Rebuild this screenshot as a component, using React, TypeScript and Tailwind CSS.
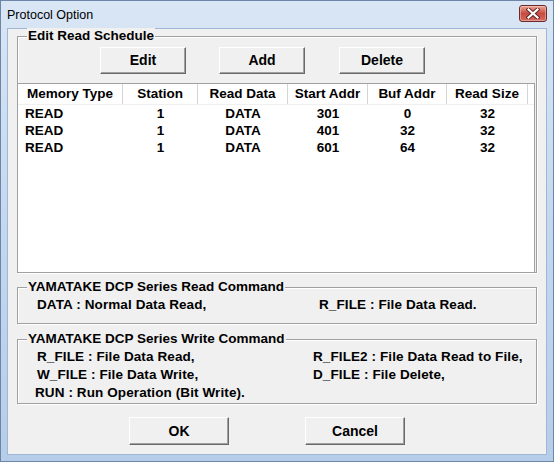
import React from 'react';

type Row = {
  memType: string;
  station: string;
  readData: string;
  startAddr: string;
  bufAddr: string;
  readSize: string;
};

const rows: Row[] = [
  { memType: 'READ', station: '1', readData: 'DATA', startAddr: '301', bufAddr: '0', readSize: '32' },
  { memType: 'READ', station: '1', readData: 'DATA', startAddr: '401', bufAddr: '32', readSize: '32' },
  { memType: 'READ', station: '1', readData: 'DATA', startAddr: '601', bufAddr: '64', readSize: '32' }
];

const headers = ['Memory Type', 'Station', 'Read Data', 'Start Addr', 'Buf Addr', 'Read Size'];

const WinButton = ({ label, className }: { label: string; className: string }) => (
  <button
    className={`flex items-center justify-center border border-t-white border-l-white border-b-[#696969] border-r-[#696969] bg-[#f0f0f0] text-[14px] font-bold text-black shadow-[inset_-1px_-1px_0_#a0a0a0] ${className}`}
  >
    {label}
  </button>
);

const GroupBox = ({
  title,
  className,
  children
}: {
  title: string;
  className: string;
  children: React.ReactNode;
}) => (
  <div
    className={`relative border border-[#a0a0a0] shadow-[inset_1px_1px_0_#ffffff,1px_1px_0_#ffffff] ${className}`}
  >
    {/* label sits on top of the border line */}
    <span className="absolute -top-[9px] left-[9px] bg-[#f0f0f0] px-[1px] text-[13.5px] leading-[16px] font-bold text-black">
      {title}
    </span>
    {children}
  </div>
);

const CloseGlyph = () => (
  <svg width="14" height="11" viewBox="0 0 14 11">
    <path d="M2.5 1.5 L11.5 9.5 M11.5 1.5 L2.5 9.5" stroke="#5b2222" strokeWidth="4" strokeLinecap="square" />
    <path d="M2.5 1.5 L11.5 9.5 M11.5 1.5 L2.5 9.5" stroke="#ffffff" strokeWidth="2.2" strokeLinecap="square" />
  </svg>
);

const App = () => {
  return (
    <div
      className="flex h-[462px] w-[554px] flex-col border border-[#6d86a8] bg-gradient-to-b from-[#d9e6f5] via-[#c3d7ef] to-[#b6cdea] text-black"
      style={{ fontFamily: '"Liberation Sans", Arial, sans-serif' }}
    >
      {/* title bar */}
      <div className="flex h-[28px] shrink-0 items-center justify-between pl-[6px] pr-[6px]">
        <span className="text-[12.5px] leading-none text-black">Protocol Option</span>
        <div className="-mt-[4px] flex h-[17px] w-[28px] items-center justify-center rounded-[3px] border border-[#6b2a2a] bg-gradient-to-b from-[#e9a394] via-[#c74a42] to-[#d76a5c] shadow-[inset_0_0_0_1px_rgba(255,255,255,0.35)]">
          <CloseGlyph />
        </div>
      </div>

      {/* client area */}
      <div className="ml-[7px] h-[425px] w-[538px] bg-[#f0f0f0] px-[9px] shadow-[0_0_0_1px_#9fb6d4]">
        <GroupBox title="Edit Read Schedule" className="mt-[7px]">
          <div className="flex pl-[82px] pt-[10px]">
            <WinButton label="Edit" className="h-[27px] w-[86px]" />
            <WinButton label="Add" className="ml-[33px] h-[27px] w-[86px]" />
            <WinButton label="Delete" className="ml-[34px] h-[27px] w-[86px]" />
          </div>

          <div className="-mb-[1px] -ml-[1px] mt-[9px] h-[190px] w-[518px] border border-[#a0a0a0] bg-white text-[13.5px] font-bold">
            <div className="flex h-[21px] border-b border-[#f0f0f0]">
              <div className="grid grid-cols-[105px_75px_90px_80px_79px_81px]">
                {headers.map((h) => (
                  <div
                    key={h}
                    className="flex items-center justify-center border-r border-[#d5d5d5] leading-[20px]"
                  >
                    {h}
                  </div>
                ))}
              </div>
            </div>
            {rows.map((r, i) => (
              <div
                key={i}
                className="grid h-[17px] grid-cols-[105px_75px_90px_80px_79px_81px] items-center leading-[17px]"
              >
                <div className="pl-[7px]">{r.memType}</div>
                <div className="text-center">{r.station}</div>
                <div className="text-center">{r.readData}</div>
                <div className="text-center">{r.startAddr}</div>
                <div className="text-center">{r.bufAddr}</div>
                <div className="text-center">{r.readSize}</div>
              </div>
            ))}
          </div>
        </GroupBox>

        <GroupBox title="YAMATAKE DCP Series Read Command" className="mt-[14px] h-[37px]">
          <div className="flex pl-[19px] pt-[9px] text-[13.5px] leading-[16px] font-bold tracking-[0.1px]">
            <span className="w-[282px]">DATA : Normal Data Read,</span>
            <span>R_FILE : File Data Read.</span>
          </div>
        </GroupBox>

        <GroupBox title="YAMATAKE DCP Series Write Command" className="mt-[15px] h-[65px]">
          <div className="flex flex-col pt-[8px] text-[13.5px] leading-[18px] font-bold tracking-[0.1px]">
            <div className="flex pl-[19px]">
              <span className="w-[276px]">R_FILE : File Data Read,</span>
              <span>R_FILE2 : File Data Read to File,</span>
            </div>
            <div className="flex pl-[19px]">
              <span className="w-[276px]">W_FILE : File Data Write,</span>
              <span>D_FILE : File Delete,</span>
            </div>
            <div className="pl-[17px]">RUN : Run Operation (Bit Write).</div>
          </div>
        </GroupBox>

        <div className="mt-[13px] flex pl-[112px]">
          <WinButton label="OK" className="h-[28px] w-[100px]" />
          <WinButton label="Cancel" className="ml-[76px] h-[28px] w-[100px]" />
        </div>
      </div>
    </div>
  );
};

export default App;
